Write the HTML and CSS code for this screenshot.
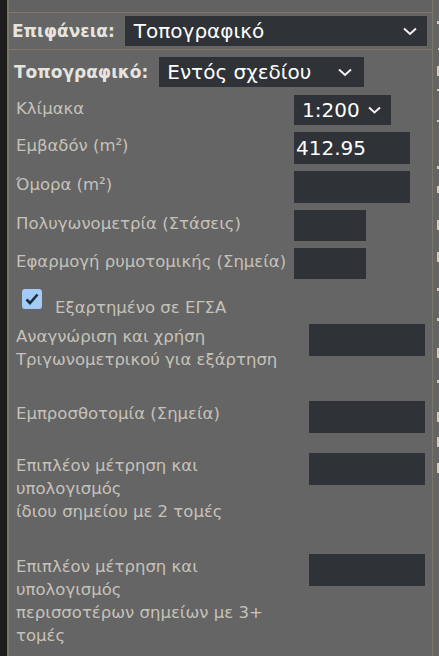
FILE: index.html
```html
<!DOCTYPE html>
<html lang="el">
<head>
    <meta charset="UTF-8">
    <title>Επιφάνεια</title>
    <link rel="stylesheet" href="styles.css">
</head>
<body>
    <div class="app">
        <div class="gutter"></div>
        <div class="panel">
            <div class="top-strip"></div>
            <div class="head-row">
                <span class="bold-label">Επιφάνεια:</span>
                <div class="select big">
                    <span>Τοπογραφικό</span>
                    <svg class="chev" width="14" height="9" viewBox="0 0 14 9"><path d="M1 1.5 L7 7 L13 1.5" fill="none" stroke="#f2f2f2" stroke-width="2"/></svg>
                </div>
            </div>
            <div class="body">
                <div class="sub-row">
                    <span class="bold-label">Τοπογραφικό:</span>
                    <div class="select mid">
                        <span>Εντός σχεδίου</span>
                        <svg class="chev" width="14" height="9" viewBox="0 0 14 9"><path d="M1 1.5 L7 7 L13 1.5" fill="none" stroke="#f2f2f2" stroke-width="2"/></svg>
                    </div>
                </div>

                <div class="group">
                    <div class="row">
                        <span class="label">Κλίμακα</span>
                        <div class="select small">
                            <span>1:200</span>
                            <svg class="chev" width="13" height="8" viewBox="0 0 13 8"><path d="M1 1.5 L6.5 6.5 L12 1.5" fill="none" stroke="#f2f2f2" stroke-width="2"/></svg>
                        </div>
                    </div>
                    <div class="row">
                        <span class="label">Εμβαδόν (m²)</span>
                        <div class="field wide value">412.95</div>
                    </div>
                    <div class="row">
                        <span class="label">Όμορα (m²)</span>
                        <div class="field wide"></div>
                    </div>
                    <div class="row">
                        <span class="label">Πολυγωνομετρία (Στάσεις)</span>
                        <div class="field narrow"></div>
                    </div>
                    <div class="row">
                        <span class="label">Εφαρμογή ρυμοτομικής (Σημεία)</span>
                        <div class="field narrow"></div>
                    </div>
                </div>

                <div class="check-row">
                    <span class="checkbox">
                        <svg width="14" height="12" viewBox="0 0 14 12"><path d="M1.5 6.5 L5 10 L12.5 1.5" fill="none" stroke="#1f2a3a" stroke-width="2.6"/></svg>
                    </span>
                    <span class="label">Εξαρτημένο σε ΕΓΣΑ</span>
                </div>

                <div class="group2">
                    <div class="row2 two">
                        <span class="label">Αναγνώριση και χρήση<br>Τριγωνομετρικού για εξάρτηση</span>
                        <div class="field box2"></div>
                    </div>
                    <div class="row2">
                        <span class="label">Εμπροσθοτομία (Σημεία)</span>
                        <div class="field box2"></div>
                    </div>
                    <div class="row2 three">
                        <span class="label">Επιπλέον μέτρηση και<br>υπολογισμός<br>ίδιου σημείου με 2 τομές</span>
                        <div class="field box2"></div>
                    </div>
                    <div class="row2">
                        <span class="label">Επιπλέον μέτρηση και<br>υπολογισμός<br>περισσοτέρων σημείων με 3+<br>τομές</span>
                        <div class="field box2"></div>
                    </div>
                </div>
            </div>
        </div>
        <div class="rail">
            <svg width="6" height="656" viewBox="0 0 6 656">
                <g fill="#cfcac0">
                    <rect x="4" y="21" width="2" height="3"/>
                    <rect x="5" y="48" width="1" height="2"/>
                    <rect x="4" y="66" width="2" height="10"/>
                    <rect x="4" y="89" width="2" height="2"/>
                    <rect x="4" y="120" width="2" height="2"/>
                    <rect x="4" y="166" width="2" height="3"/>
                    <rect x="4" y="186" width="2" height="7"/>
                    <rect x="4" y="220" width="2" height="10"/>
                    <rect x="4" y="252" width="2" height="10"/>
                    <rect x="4" y="288" width="2" height="3"/>
                    <rect x="4" y="318" width="2" height="3"/>
                    <rect x="4" y="348" width="2" height="10"/>
                    <rect x="4" y="380" width="2" height="3"/>
                    <rect x="4" y="412" width="2" height="10"/>
                    <rect x="4" y="437" width="2" height="10"/>
                    <rect x="4" y="463" width="2" height="10"/>
                </g>
            </svg>
        </div>
    </div>
</body>
</html>
```

FILE: styles.css
```css
body {
    margin: 0;
    padding: 0;
    background-color: #1d1d1d;
    font-family: "DejaVu Sans", Verdana, sans-serif;
    font-size: 16.5px;
    color: #c6c2ba;
}
.app {
    display: flex;
    width: 439px;
    height: 656px;
    overflow: hidden;
}
.gutter {
    width: 7px;
    background-color: #1d1d1d;
}
.panel {
    width: 423px;
    background-color: #656565;
    border-left: 2px solid #7b7567;
    border-right: 1px solid #7b7567;
}
.rail {
    flex: 1;
    background-color: #646464;
}
.rail svg {
    display: block;
}
.top-strip {
    height: 12px;
    border-bottom: 1px solid #80796b;
    background-color: #626262;
}
.head-row {
    display: flex;
    align-items: center;
    height: 36px;
    padding-left: 3px;
    border-bottom: 1px solid #80796b;
}
.bold-label {
    font-weight: bold;
    color: #e6e4df;
    font-size: 17px;
}
.select {
    display: flex;
    align-items: center;
    justify-content: space-between;
    background-color: #2f3236;
    color: #ffffff;
    font-size: 20px;
    height: 30px;
    box-sizing: border-box;
}
.select.big {
    margin-left: 10px;
    width: 302px;
    padding: 0 10px 0 9px;
}
.select.mid {
    margin-left: 11px;
    width: 205px;
    padding: 0 12px 0 8px;
}
.select.small {
    width: 97px;
    padding: 0 10px 0 8px;
}
.chev {
    display: block;
}
.body {
    padding-left: 5px;
}
.sub-row {
    display: flex;
    align-items: center;
    padding-top: 7px;
}
.group {
    display: flex;
    flex-direction: column;
    gap: 7px;
    padding-top: 8px;
    padding-left: 2px;
}
.row {
    display: grid;
    grid-template-columns: 278px auto;
    align-items: start;
}
.label {
    line-height: 23px;
    white-space: nowrap;
}
.row .label {
    padding-top: 2px;
}
.field {
    background-color: #2f3236;
    height: 31px;
}
.field.wide {
    width: 116px;
    height: 32px;
}
.field.narrow {
    width: 72px;
}
.field.value {
    color: #ffffff;
    font-size: 20px;
    line-height: 32px;
    padding-left: 2px;
    box-sizing: border-box;
}
.check-row {
    display: flex;
    align-items: flex-start;
    gap: 13px;
    padding: 10px 0 0 8px;
}
.check-row .label {
    margin-top: 7px;
}
.checkbox {
    display: flex;
    align-items: center;
    justify-content: center;
    width: 20px;
    height: 20px;
    border-radius: 3px;
    background-color: #a3cbf7;
}
.group2 {
    display: flex;
    flex-direction: column;
    padding-top: 5px;
    padding-left: 2px;
}
.row2 {
    display: grid;
    grid-template-columns: 293px auto;
    align-items: start;
}
.row2 .label {
    padding-top: 1px;
    padding-bottom: 28px;
}
.row2.two .label {
    padding-bottom: 30px;
}
.row2.three .label {
    padding-bottom: 31px;
}
.box2 {
    width: 116px;
    height: 32px;
}
```
